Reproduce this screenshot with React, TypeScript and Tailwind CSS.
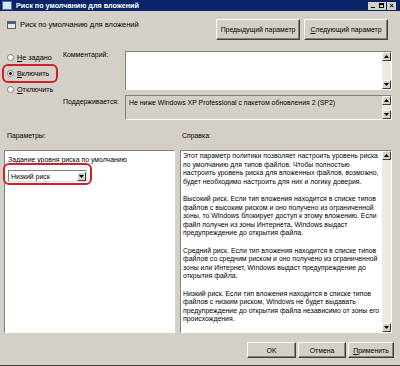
import React from 'react'

const helpLines = [
  'Этот параметр политики позволяет настроить уровень риска',
  'по умолчанию для типов файлов. Чтобы полностью',
  'настроить уровень риска для вложенных файлов, возможно,',
  'будет необходимо настроить для них и логику доверия.',
  '',
  'Высокий риск. Если тип вложения находится в списке типов',
  'файлов с высоким риском и оно получено из ограниченной',
  'зоны, то Windows блокирует доступ к этому вложению. Если',
  'файл получен из зоны Интернета, Windows выдаст',
  'предупреждение до открытия файла.',
  '',
  'Средний риск. Если тип вложения находится в списке типов',
  'файлов со средним риском и оно получено из ограниченной',
  'зоны или Интернет, Windows выдаст предупреждение до',
  'открытия файла.',
  '',
  'Низкий риск. Если тип вложения находится в списке типов',
  'файлов с низким риском, Windows не будет выдавать',
  'предупреждение до открытия файла независимо от зоны его',
  'происхождения.',
]

const Arrow = ({ up }: { up?: boolean }) => (
  <div className="w-[9px] h-[9px] bg-[#d4d0c8] border border-t-white border-l-white border-r-[#404040] border-b-[#404040] flex items-center justify-center">
    <svg width="5" height="3" viewBox="0 0 5 3">
      {up ? <path d="M2.5 0L5 3H0z" fill="#000" /> : <path d="M0 0H5L2.5 3z" fill="#000" />}
    </svg>
  </div>
)

const ScrollBar = () => (
  <div className="w-[9px] h-full flex flex-col justify-between bg-[#ebe9e5] shrink-0">
    <Arrow up />
    <Arrow />
  </div>
)

const Radio = ({ label, u, rest, checked }: { label: string; u: string; rest: string; checked?: boolean }) => (
  <div className="h-[16px] flex items-center gap-[3px]" aria-label={label}>
    <div className="w-[7px] h-[7px] rounded-full bg-white border border-[#808080] flex items-center justify-center">
      {checked && <div className="w-[3px] h-[3px] rounded-full bg-black" />}
    </div>
    <span>
      <span className="underline">{u}</span>
      {rest}
    </span>
  </div>
)

const Btn = ({ children, className }: { children: React.ReactNode; className: string }) => (
  <div
    className={`flex items-center justify-center bg-[#d4d0c8] border border-t-white border-l-white border-r-[#404040] border-b-[#404040] shadow-[inset_-1px_-1px_0_#808080] ${className}`}
  >
    {children}
  </div>
)

export default function App() {
  return (
    <div
      className="relative w-[400px] h-[366px] bg-[#d4d0c8] text-black text-[6.9px] leading-[9px] flex flex-col border-b border-[#404040] overflow-hidden"
      style={{ fontFamily: '"Liberation Sans", Arial, sans-serif' }}
    >
      {/* title bar */}
      <div className="h-[11px] bg-[#0a246a] flex items-center pl-[2px] pr-[4px]">
        <div className="w-[10px] h-[9px] bg-[#d8e4f8] border border-[#5070a8] mr-[4px]" />
        <span className="text-white font-bold text-[7.2px]">Риск по умолчанию для вложений</span>
        <div className="ml-auto flex gap-0">
          <Btn className="w-[9px] h-[8px] border-0 shadow-none">
            <div className="w-[4px] h-[1px] bg-black mt-[4px]" />
          </Btn>
          <Btn className="w-[9px] h-[8px] border-0 shadow-none">
            <div className="w-[5px] h-[5px] border border-black border-t-2" />
          </Btn>
          <Btn className="w-[9px] h-[8px] border-0 shadow-none ml-[1px]">
            <span className="text-[7px] leading-none font-bold">×</span>
          </Btn>
        </div>
      </div>

      {/* header */}
      <div className="h-[33px] flex items-start">
        <div className="flex items-center pl-[7px] pt-[9px]">
          <div className="w-[9px] h-[8px] border border-[#606060] bg-[#e8e8e8] mr-[4px] flex flex-col">
            <div className="h-[2px] bg-[#406090]" />
          </div>
          <span className="text-[7.5px]">Риск по умолчанию для вложений</span>
        </div>
        <div className="ml-auto mr-[12px] mt-[8px] flex gap-[4px]">
          <Btn className="w-[84px] h-[21px]">Предыдущий параметр</Btn>
          <Btn className="w-[84px] h-[21px]">
            <span>
              <span className="underline">С</span>ледующий параметр
            </span>
          </Btn>
        </div>
      </div>

      {/* state + comment */}
      <div className="mt-[5px] flex h-[71px]">
        <div className="w-[60px] pl-[7px] flex flex-col text-[7.2px]">
          <Radio label="Не задано" u="Н" rest="е задано" />
          <Radio label="Включить" u="В" rest="ключить" checked />
          <Radio label="Отключить" u="О" rest="тключить" />
        </div>
        <div className="w-[65px] pl-[3px] pt-[1px] flex flex-col">
          <span>Комментарий:</span>
          <span className="mt-[38px]">Поддерживается:</span>
        </div>
        <div className="w-[267px] flex flex-col pt-[2px]">
          <div className="h-[39px] bg-white border border-t-[#808080] border-l-[#808080] border-r-white border-b-white flex">
            <div className="flex-1" />
            <ScrollBar />
          </div>
          <div className="mt-[5px] h-[25px] bg-[#d4d0c8] border border-t-[#808080] border-l-[#808080] border-r-white border-b-white flex">
            <div className="flex-1 pl-[3px] pt-[2px]">Не ниже Windows XP Professional с пакетом обновления 2 (SP2)</div>
            <ScrollBar />
          </div>
        </div>
      </div>

      {/* labels */}
      <div className="mt-[11px] h-[9px] flex">
        <span className="w-[182px] pl-[7px]">Параметры:</span>
        <span>Справка:</span>
      </div>

      {/* panels */}
      <div className="mt-[10px] h-[183px] flex pl-[4px] gap-[5px]">
        <div className="w-[171px] bg-white border border-t-[#808080] border-l-[#808080] border-r-white border-b-white pl-[3px] pt-[4px]">
          <div>Задание уровня риска по умолчанию</div>
          <div className="mt-[6px] w-[79px] h-[12px] bg-white border border-t-[#808080] border-l-[#808080] border-r-[#e0e0e0] border-b-[#e0e0e0] flex items-center">
            <span className="flex-1 pl-[2px]">Низкий риск</span>
            <Arrow />
          </div>
        </div>
        <div className="w-[212px] bg-white border border-t-[#808080] border-l-[#808080] border-r-white border-b-white flex">
          <div className="flex-1 pl-[2px] pt-[1px] leading-[8.6px] whitespace-nowrap overflow-hidden">
            {helpLines.map((l, i) => (
              <div key={i} className="h-[8.6px]">
                {l}
              </div>
            ))}
          </div>
          <ScrollBar />
        </div>
      </div>

      {/* bottom buttons */}
      <div className="mt-[9px] flex justify-end pr-[6px] gap-[2px]">
        <Btn className="w-[49px] h-[16px]">OK</Btn>
        <Btn className="w-[48px] h-[16px]">Отмена</Btn>
        <Btn className="w-[46px] h-[16px]">
          <span>
            <span className="underline">П</span>рименить
          </span>
        </Btn>
      </div>

      {/* red annotation highlights */}
      <div className="absolute left-[2px] top-[64px] w-[56px] h-[19px] border-2 border-[#d0202a] rounded-[6px]" />
      <div className="absolute left-[3px] top-[163px] w-[89px] h-[22px] border-2 border-[#d0202a] rounded-[6px]" />
    </div>
  )
}
